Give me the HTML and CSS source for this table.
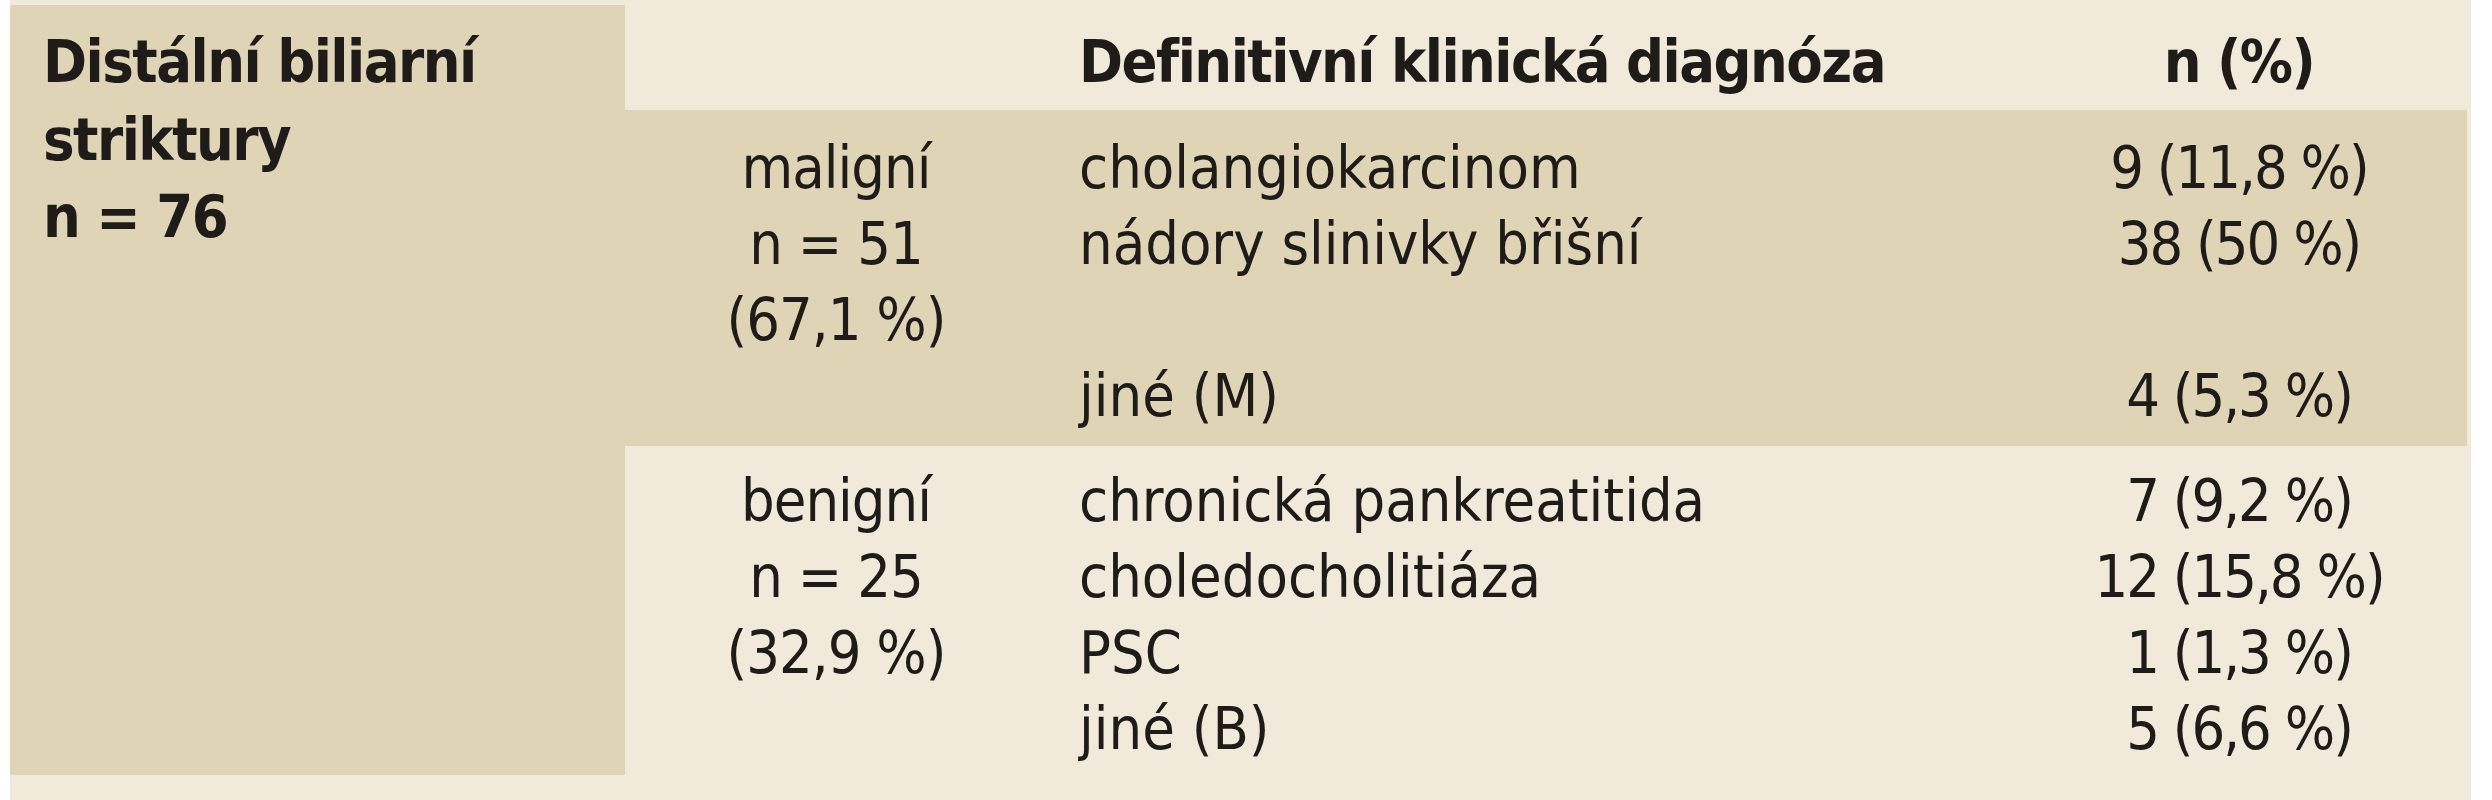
FILE: index.html
```html
<!DOCTYPE html>
<html lang="cs">
<head>
<meta charset="utf-8">
<title>Distální biliární striktury</title>
<link rel="stylesheet" href="styles.css">
</head>
<body>
<div class="sheet">
  <div class="side">
    <div class="line">Distální biliarní</div>
    <div class="line">striktury</div>
    <div class="line">n = 76</div>
  </div>
  <div class="main">
    <div class="row head">
      <div class="c2"></div>
      <div class="c3"><div class="line">Definitivní klinická diagnóza</div></div>
      <div class="c4"><div class="line">n (%)</div></div>
    </div>
    <div class="row group malign">
      <div class="c2">
        <div class="line">maligní</div>
        <div class="line">n = 51</div>
        <div class="line">(67,1 %)</div>
      </div>
      <div class="c3">
        <div class="line">cholangiokarcinom</div>
        <div class="line">nádory slinivky břišní</div>
        <div class="line blank"></div>
        <div class="line">jiné (M)</div>
      </div>
      <div class="c4">
        <div class="line">9 (11,8 %)</div>
        <div class="line">38 (50 %)</div>
        <div class="line blank"></div>
        <div class="line">4 (5,3 %)</div>
      </div>
    </div>
    <div class="row group benign">
      <div class="c2">
        <div class="line">benigní</div>
        <div class="line">n = 25</div>
        <div class="line">(32,9 %)</div>
      </div>
      <div class="c3">
        <div class="line">chronická pankreatitida</div>
        <div class="line">choledocholitiáza</div>
        <div class="line">PSC</div>
        <div class="line">jiné (B)</div>
      </div>
      <div class="c4">
        <div class="line">7 (9,2 %)</div>
        <div class="line">12 (15,8 %)</div>
        <div class="line">1 (1,3 %)</div>
        <div class="line">5 (6,6 %)</div>
      </div>
    </div>
  </div>
</div>
</body>
</html>
```

FILE: styles.css
```css
html, body {
  margin: 0;
  padding: 0;
  background: #ffffff;
}

.sheet {
  display: flex;
  margin-left: 10px;
  width: 2461px;
  box-sizing: border-box;
  padding: 5px 4px 40px 0;
  background: #f1e9da;
  color: #1f1b18;
  font-family: "DejaVu Sans Condensed", "Liberation Sans", sans-serif;
  font-size: 59px;
  letter-spacing: 0;
}

.line {
  line-height: 76px;
  height: 76px;
  white-space: nowrap;
}

.side {
  width: 615px;
  height: 770px;
  box-sizing: border-box;
  flex: none;
  background: #dfd4b6;
  padding: 18px 0 0 33px;
  font-weight: bold;
  letter-spacing: -1.5px;
}

.side .line {
  line-height: 77.5px;
  height: 77.5px;
}

.main {
  flex: 1;
  display: flex;
  flex-direction: column;
}

.row {
  display: grid;
  grid-template-columns: 422px 964px 1fr;
  box-sizing: border-box;
}

.head {
  height: 105px;
  padding-top: 19px;
  font-weight: bold;
  letter-spacing: -1.5px;
}

.malign {
  height: 336px;
  padding-top: 20px;
  background: #dfd4b6;
}

.benign {
  height: 329px;
  padding-top: 17px;
}

.c2 {
  text-align: center;
  letter-spacing: -1px;
}

.c3 {
  padding-left: 32px;
}

.c4 {
  text-align: center;
}

.group .c4 {
  letter-spacing: -2px;
}
```
